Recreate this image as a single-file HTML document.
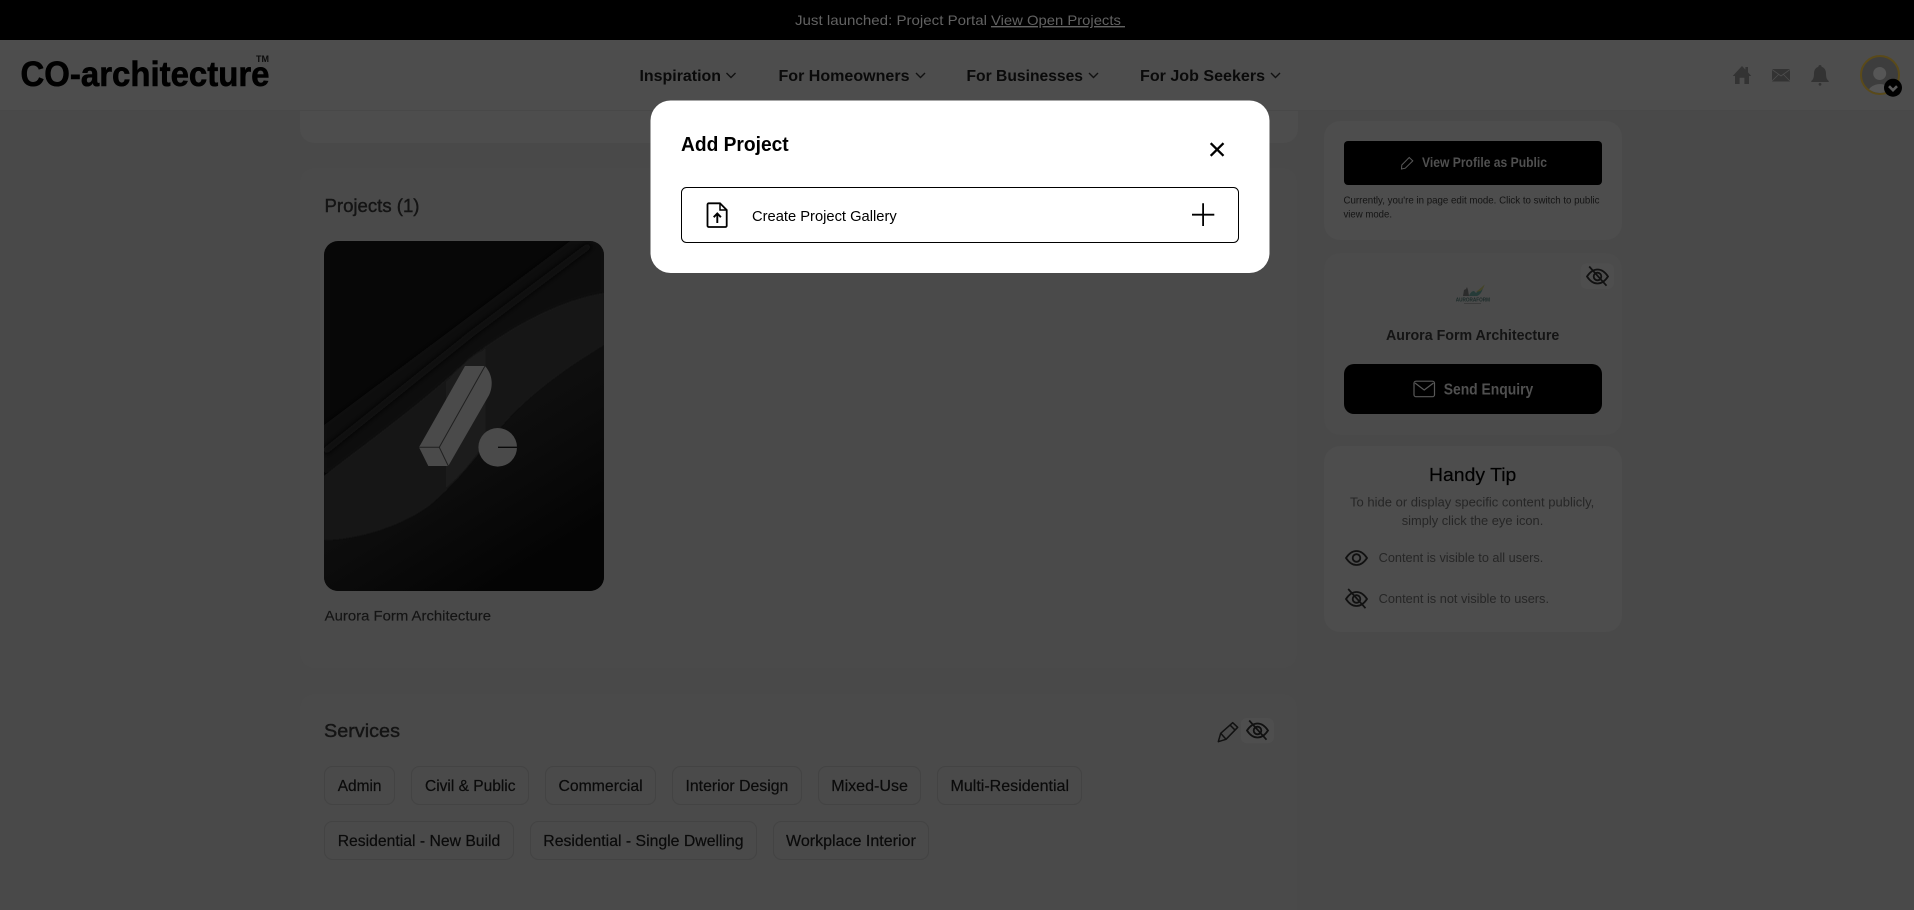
<!DOCTYPE html>
<html lang="en">
<head>
<meta charset="utf-8">
<title>CO-architecture - Add Project</title>
<style>
html,body{margin:0;padding:0;width:1914px;height:910px;overflow:hidden;background:#494949}
svg{display:block}
text{font-family:"Liberation Sans",Arial,sans-serif;white-space:pre}
</style>
</head>
<body>
<svg width="1914" height="910" viewBox="0 0 1914 910">
<defs>
  <g id="eye" fill="none" stroke="#111" stroke-width="1.8">
    <path d="M1 8C4 3.4 7.5 1 11.5 1S19 3.4 22 8c-3 4.6-6.5 7-10.5 7S4 12.6 1 8z"/>
    <circle cx="11.5" cy="8" r="3.8"/>
  </g>
  <g id="eyeoff" fill="none" stroke="#111" stroke-width="1.8">
    <path d="M1 8C4 3.4 7.5 1 11.5 1S19 3.4 22 8c-3 4.6-6.5 7-10.5 7S4 12.6 1 8z"/>
    <circle cx="11.5" cy="8" r="3.8"/>
    <path d="M3.2 -2L20.5 17.2" stroke-width="1.7"/>
  </g>
  <clipPath id="imgclip"><rect x="324" y="241" width="280" height="350" rx="14"/></clipPath>
  <clipPath id="avclip"><circle cx="1880" cy="75" r="18"/></clipPath>
  <filter id="b1" x="-5%" y="-5%" width="110%" height="110%"><feGaussianBlur stdDeviation=".7"/></filter>
  <filter id="b3" x="-20%" y="-20%" width="140%" height="140%"><feGaussianBlur stdDeviation="3"/></filter>
  <linearGradient id="sw" x1="324" y1="0" x2="604" y2="0" gradientUnits="userSpaceOnUse">
    <stop offset="0" stop-color="#141414"/>
    <stop offset=".5" stop-color="#1a1a1a"/>
    <stop offset=".8" stop-color="#171717"/>
    <stop offset="1" stop-color="#121212"/>
  </linearGradient>
  <linearGradient id="sw2" x1="430" y1="380" x2="540" y2="560" gradientUnits="userSpaceOnUse">
    <stop offset="0" stop-color="#121212"/>
    <stop offset=".5" stop-color="#0c0c0c"/>
    <stop offset="1" stop-color="#040404"/>
  </linearGradient>
</defs>

<!-- page background & cards -->
<rect width="1914" height="910" fill="#494949"/>
<rect x="300" y="90" width="998" height="53" rx="14" fill="#4d4d4d"/>
<rect x="300" y="168" width="997" height="500" rx="14" fill="#4a4a4a"/>
<rect x="300" y="694" width="997" height="260" rx="14" fill="#4a4a4a"/>

<!-- top banner -->
<rect width="1914" height="40" fill="#000"/>
<text x="795" y="25" font-size="14" fill="#626262" textLength="192" lengthAdjust="spacingAndGlyphs">Just launched: Project Portal</text>
<text x="991" y="25" font-size="14" fill="#626262" text-decoration="underline" textLength="134" lengthAdjust="spacingAndGlyphs">View Open Projects </text>

<!-- header -->
<rect y="40" width="1914" height="70" fill="#4d4d4d"/>
<rect y="110" width="1914" height="1" fill="#484848"/>
<text x="20.5" y="86" font-size="35" font-weight="700" fill="#000" stroke="#000" stroke-width=".6" textLength="249" lengthAdjust="spacingAndGlyphs">CO-architecture</text>
<text x="256" y="62" font-size="9.5" font-weight="700" fill="#0c0c0c" textLength="13" lengthAdjust="spacingAndGlyphs">TM</text>

<g font-size="16" font-weight="700" fill="#0a0a0a">
<text x="639.5" y="81" textLength="81.5" lengthAdjust="spacingAndGlyphs">Inspiration</text>
<text x="778.5" y="81" textLength="131" lengthAdjust="spacingAndGlyphs">For Homeowners</text>
<text x="966.5" y="81" textLength="116.5" lengthAdjust="spacingAndGlyphs">For Businesses</text>
<text x="1140" y="81" textLength="125" lengthAdjust="spacingAndGlyphs">For Job Seekers</text>
</g>
<g fill="none" stroke="#111" stroke-width="1.4">
<path d="M726.5 73l4.5 4.5 4.5-4.5"/>
<path d="M916 73l4.5 4.5 4.5-4.5"/>
<path d="M1089 73l4.5 4.5 4.5-4.5"/>
<path d="M1271 73l4.5 4.5 4.5-4.5"/>
</g>

<!-- header right icons -->
<path d="M1732.7 76l9.3-10 3.4 3.6V67h2.6v5.4l3.3 3.6h-2.3v8h-4.6v-6.2h-4.8V84H1735v-8z" fill="#333"/>
<rect x="1772" y="69" width="18" height="12.5" fill="#333"/>
<path d="M1772 69.5l9 6.5 9-6.5M1772 81l6.5-6.5M1790 81l-6.5-6.5" fill="none" stroke="#4d4d4d" stroke-width=".8"/>
<path d="M1820 65c1 0 1.600.7 1.600 1.700 3 1 4.400 3.500 4.400 6.800 0 4 .8 6 2.700 7.500v1h-17.400v-1c1.900-1.500 2.700-3.500 2.700-7.500 0-3.300 1.400-5.800 4.400-6.800 0-1 .6-1.700 1.600-1.700z" fill="#333"/>
<circle cx="1820" cy="84.300" r="1.400" fill="#333"/>
<circle cx="1880" cy="75" r="19" fill="#3d3d3d" stroke="#5a4a1a" stroke-width="2"/>
<g clip-path="url(#avclip)" fill="#565656">
<circle cx="1879.700" cy="73.500" r="6.500"/>
<ellipse cx="1880" cy="95" rx="13" ry="11"/>
</g>
<circle cx="1893" cy="87.700" r="9" fill="#000"/>
<path d="M1889 86.200l4 4 4-4" fill="none" stroke="#5a5a5a" stroke-width="2.600"/>

<!-- projects -->
<text x="324.500" y="212" font-size="18" fill="#141414" stroke="#141414" stroke-width=".4" textLength="95" lengthAdjust="spacingAndGlyphs">Projects (1)</text>

<g clip-path="url(#imgclip)">
  <rect x="324" y="241" width="280" height="350" fill="#070707"/>
  <!-- upper band between the top corner and the swoosh -->
  <path d="M324 425L570 241H604V293C570 298 520 320 470 358 420 405 370 440 324 476z" fill="#0a0a0a" filter="url(#b3)"/>
  <path d="M324 452L470 335 590 245" fill="none" stroke="#070707" stroke-width="7" filter="url(#b3)"/>
  <!-- lower-right tone -->
  <path d="M324 476C370 440 420 405 470 358 520 320 570 298 604 293V591H324z" fill="url(#sw2)"/>
  <!-- main swoosh -->
  <path d="M324 476C370 440 420 405 470 358 520 320 570 298 604 293V345C570 365 535 390 507 420 480 450 460 480 430 505 395 530 350 540 324 540z" fill="url(#sw)" filter="url(#b1)"/>
</g>

<!-- image logo -->
<path d="M465 366h20c4.500 5 6.700 11 6.700 17 0 5-1.200 10-3.700 14l-39.700 69h-20l-9.300-18.700z" fill="#4a4a4a"/>
<path d="M485 366L439.300 447.300H419M439.300 447.300L448.300 466" fill="none" stroke="#1f1f1f" stroke-width="1"/>
<circle cx="497.700" cy="447.300" r="19.300" fill="#4a4a4a"/>
<path d="M498 447.300h19" stroke="#0a0a0a" stroke-width="1.300"/>

<text x="324.700" y="620.500" font-size="14" fill="#141414" stroke="#141414" stroke-width=".15" textLength="166.300" lengthAdjust="spacingAndGlyphs">Aurora Form Architecture</text>

<!-- services -->
<text x="324" y="737" font-size="18" fill="#141414" stroke="#141414" stroke-width=".4" textLength="76" lengthAdjust="spacingAndGlyphs">Services</text>
<g fill="none" stroke="#434343" stroke-width="1">
<rect x="324.500" y="766.500" width="70" height="38" rx="8"/>
<rect x="411.500" y="766.500" width="117" height="38" rx="8"/>
<rect x="545.500" y="766.500" width="110" height="38" rx="8"/>
<rect x="672.500" y="766.500" width="129" height="38" rx="8"/>
<rect x="818.500" y="766.500" width="102" height="38" rx="8"/>
<rect x="937.500" y="766.500" width="144" height="38" rx="8"/>
<rect x="324.500" y="821.500" width="189" height="38" rx="8"/>
<rect x="530.500" y="821.500" width="226" height="38" rx="8"/>
<rect x="773.500" y="821.500" width="155" height="38" rx="8"/>
</g>
<g font-size="16" fill="#0a0a0a" stroke="#0a0a0a" stroke-width=".2">
<text x="337.700" y="791" textLength="43.800" lengthAdjust="spacingAndGlyphs">Admin</text>
<text x="425" y="791" textLength="90.500" lengthAdjust="spacingAndGlyphs">Civil &amp; Public</text>
<text x="558.500" y="791" textLength="84.100" lengthAdjust="spacingAndGlyphs">Commercial</text>
<text x="685.500" y="791" textLength="102.800" lengthAdjust="spacingAndGlyphs">Interior Design</text>
<text x="831.200" y="791" textLength="76.800" lengthAdjust="spacingAndGlyphs">Mixed-Use</text>
<text x="950.500" y="791" textLength="118.500" lengthAdjust="spacingAndGlyphs">Multi-Residential</text>
<text x="337.700" y="846" textLength="162.600" lengthAdjust="spacingAndGlyphs">Residential - New Build</text>
<text x="543.300" y="846" textLength="200.300" lengthAdjust="spacingAndGlyphs">Residential - Single Dwelling</text>
<text x="786" y="846" textLength="129.800" lengthAdjust="spacingAndGlyphs">Workplace Interior</text>
</g>
<path d="M1218.300 741.700l2.400-8.400 12-10.600 5 4.600-11.700 12zM1230 725l5.300 5.300M1220.700 733.300l5.300 6" fill="none" stroke="#111" stroke-width="1.500" stroke-linejoin="round"/>
<rect x="1240.700" y="718" width="33.300" height="25.300" rx="6" fill="#4e4e4e"/>
<use href="#eyeoff" x="1246" y="722.500"/>

<!-- right column: view profile -->
<rect x="1324" y="121" width="298" height="119" rx="16" fill="#4d4d4d"/>
<rect x="1344" y="141" width="258" height="44" rx="4" fill="#000"/>
<path d="M1401.800 165l7.400-7.500 3.600 3.400-7.500 7.300-3.800.8z" fill="none" stroke="#585858" stroke-width="1"/>
<text x="1422" y="167" font-size="13.500" font-weight="700" fill="#505050" textLength="125" lengthAdjust="spacingAndGlyphs">View Profile as Public</text>
<g font-size="10.500" fill="#141414">
<text x="1343.500" y="203.300" textLength="256" lengthAdjust="spacingAndGlyphs">Currently, you're in page edit mode. Click to switch to public</text>
<text x="1343.500" y="217.300" textLength="48.500" lengthAdjust="spacingAndGlyphs">view mode.</text>
</g>

<!-- right column: company card -->
<rect x="1324" y="253" width="298" height="182" rx="16" fill="#4b4b4b"/>
<rect x="1580.700" y="263.300" width="33.300" height="25.700" rx="6" fill="#4e4e4e"/>
<use href="#eyeoff" x="1586" y="268.500"/>
<!-- small logo -->
<path d="M1463 296l1-6 2-1 1-2 1 3 1 6z" fill="#2c2c2c"/>
<path d="M1469 296c1-3 3-5 5-5l2 2 3-3 3-2 1-2c0 5-3 9-6 10z" fill="#263b38"/>
<path d="M1476 292l6-5 2.500-2.500c-.5 3-2 5-4 6.500z" fill="#454528"/>
<text x="1455.700" y="301.500" font-size="5" font-weight="700" fill="#1c2b29" textLength="34.300" lengthAdjust="spacingAndGlyphs">AURORAFORM</text>
<rect x="1464" y="303" width="17" height="1" fill="#3a3a3a"/>
<text x="1386" y="340" font-size="15" font-weight="700" fill="#141414" textLength="173.300" lengthAdjust="spacingAndGlyphs">Aurora Form Architecture</text>
<rect x="1344" y="364" width="258" height="50" rx="10" fill="#000"/>
<rect x="1414" y="381.200" width="20.500" height="15.500" rx="2" fill="none" stroke="#585858" stroke-width="1.200"/>
<path d="M1415 383l9.200 7 9.300-7" fill="none" stroke="#585858" stroke-width="1.200"/>
<text x="1443.700" y="394.300" font-size="15.500" font-weight="700" fill="#505050" textLength="89.600" lengthAdjust="spacingAndGlyphs">Send Enquiry</text>

<!-- right column: handy tip -->
<rect x="1324" y="446" width="298" height="186" rx="16" fill="#4d4d4d"/>
<text x="1429" y="481" font-size="18" fill="#000" stroke="#000" stroke-width=".15" textLength="87.300" lengthAdjust="spacingAndGlyphs">Handy Tip</text>
<g font-size="13" fill="#262626">
<text x="1350" y="506.700" textLength="244.300" lengthAdjust="spacingAndGlyphs">To hide or display specific content publicly,</text>
<text x="1401.700" y="525" textLength="141.600" lengthAdjust="spacingAndGlyphs">simply click the eye icon.</text>
<text x="1378.700" y="562" font-size="12.500" textLength="164.600" lengthAdjust="spacingAndGlyphs">Content is visible to all users.</text>
<text x="1378.700" y="603.200" font-size="12.500" textLength="170.300" lengthAdjust="spacingAndGlyphs">Content is not visible to users.</text>
</g>
<use href="#eye" x="1345" y="550"/>
<use href="#eyeoff" x="1345" y="591"/>

<!-- modal -->
<rect x="650.500" y="100.500" width="619" height="172.500" rx="20" fill="#fff"/>
<text x="681" y="151" font-size="20" font-weight="700" fill="#000" textLength="107.700" lengthAdjust="spacingAndGlyphs">Add Project</text>
<path d="M1210.700 143.200l12.800 12.600M1223.500 143.200l-12.800 12.600" fill="none" stroke="#000" stroke-width="2.300"/>
<rect x="681.500" y="187.500" width="557" height="55" rx="5" fill="#fff" stroke="#000" stroke-width="1"/>
<path d="M708.800 203.300h11.200l6.700 6.700v15.700a1.300 1.300 0 0 1-1.300 1.300h-16.600a1.300 1.300 0 0 1-1.300-1.300v-21.100a1.300 1.300 0 0 1 1.300-1.300z" fill="none" stroke="#000" stroke-width="1.800"/>
<path d="M720 203.300v6.700h6.700" fill="none" stroke="#000" stroke-width="1.500"/>
<path d="M717.300 223v-9M713.700 217.200l3.600-3.700 3.600 3.700" fill="none" stroke="#000" stroke-width="1.900"/>
<text x="752" y="221" font-size="14.500" fill="#000" textLength="144.700" lengthAdjust="spacingAndGlyphs">Create Project Gallery</text>
<path d="M1192 214.700h22.300M1203.100 203.300v22.700" fill="none" stroke="#000" stroke-width="1.800"/>
</svg>
</body>
</html>
